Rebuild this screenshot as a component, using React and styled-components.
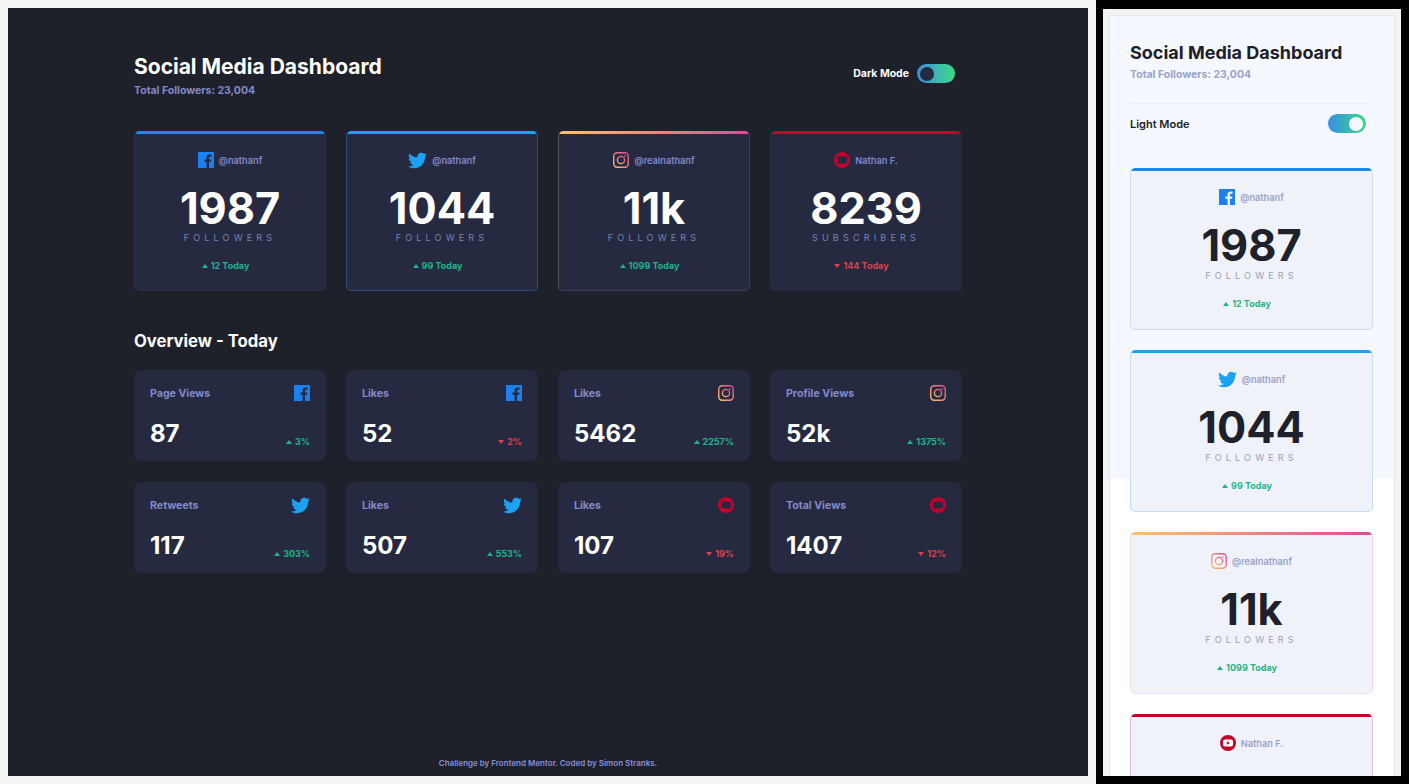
import React from 'react'
import styled, { createGlobalStyle } from 'styled-components'
import { FaTwitter } from 'react-icons/fa'

const GlobalStyle = createGlobalStyle`
  html, body {
    margin: 0;
    padding: 0;
    background: #000;
    font-family: Inter, "Liberation Sans", sans-serif;
  }
  * { box-sizing: border-box; }
`

const BRANDS = {
  facebook: { bar: '#1b8ae6', side: '#262f4f', lightSide: '#c9dcf0' },
  twitter: { bar: '#1da1f2', side: '#2b4c78', lightSide: '#c4dcee' },
  instagram: { bar: 'linear-gradient(90deg, #fdc468, #df4996)', side: '#3c3f55', left: '#565250', right: '#443a58', lightSide: '#e8e8f0', lightLeft: '#eee4dc', lightRight: '#eed6df' },
  youtube: { bar: '#c4032b', side: '#282a40', lightSide: '#dcc2d0' },
}

const followers = [
  { brand: 'facebook', handle: '@nathanf', count: '1987', label: 'FOLLOWERS', change: '12 Today', up: true },
  { brand: 'twitter', handle: '@nathanf', count: '1044', label: 'FOLLOWERS', change: '99 Today', up: true },
  { brand: 'instagram', handle: '@realnathanf', count: '11k', label: 'FOLLOWERS', change: '1099 Today', up: true },
  { brand: 'youtube', handle: 'Nathan F.', count: '8239', label: 'SUBSCRIBERS', change: '144 Today', up: false },
]

const overview = [
  { brand: 'facebook', title: 'Page Views', count: '87', change: '3%', up: true },
  { brand: 'facebook', title: 'Likes', count: '52', change: '2%', up: false },
  { brand: 'instagram', title: 'Likes', count: '5462', change: '2257%', up: true },
  { brand: 'instagram', title: 'Profile Views', count: '52k', change: '1375%', up: true },
  { brand: 'twitter', title: 'Retweets', count: '117', change: '303%', up: true },
  { brand: 'twitter', title: 'Likes', count: '507', change: '553%', up: true },
  { brand: 'youtube', title: 'Likes', count: '107', change: '19%', up: false },
  { brand: 'youtube', title: 'Total Views', count: '1407', change: '12%', up: false },
]

function BrandIcon({ brand, light, id }) {
  if (brand === 'facebook') {
    return (
      <svg width="16" height="16" viewBox="0 0 20 20">
        <path fill="#1b81f0" d="M20 0H0v20h10.7v-7.75H8.08V9.24h2.6V7c0-2.58 1.58-4 3.89-4 1.1 0 2.05.08 2.33.12v2.7h-1.6c-1.25 0-1.5.6-1.5 1.47v1.93h2.99l-.39 3.02h-2.6V20H20z" />
      </svg>
    )
  }
  if (brand === 'twitter') {
    return <FaTwitter size={19} color="#1da1f2" />
  }
  if (brand === 'instagram') {
    return (
      <svg width="16" height="16" viewBox="0 0 16 16" fill="none">
        <defs>
          <linearGradient id={id} x1="0" y1="1" x2="1" y2="0">
            <stop offset="0" stopColor="#fdc468" />
            <stop offset="1" stopColor="#df4996" />
          </linearGradient>
        </defs>
        <rect x="0.75" y="0.75" width="14.5" height="14.5" rx="3.5" stroke={`url(#${id})`} strokeWidth="1.4" />
        <circle cx="8" cy="8" r="3.6" stroke={`url(#${id})`} strokeWidth="1.3" />
        <circle cx="12" cy="4" r="0.8" fill={`url(#${id})`} />
      </svg>
    )
  }
  return (
    <svg width="16" height="16" viewBox="0 0 16 16">
      <circle cx="8" cy="8" r="8" fill="#c4032b" />
      <rect x="3" y="4.4" width="10" height="7.2" rx="2" fill={light ? '#fff' : '#252a41'} />
      <path d="M6.8 6.2v3.6L10 8z" fill={light ? '#c4032b' : '#3a2238'} />
    </svg>
  )
}

function Change({ up, children }) {
  return (
    <ChangeText $up={up}>
      <svg width="6" height="4" viewBox="0 0 6 4">
        <path d={up ? 'M0 4L3 0l3 4z' : 'M0 0l3 4 3-4z'} fill="currentColor" />
      </svg>
      {children}
    </ChangeText>
  )
}

// the last phone card runs off the frame, only its top row is in view
function FollowerCard({ item, light, index, headerOnly }) {
  const brand = BRANDS[item.brand]
  return (
    <Card $brand={brand} $light={light}>
      <TopBar $bar={brand.bar} />
      <Handle>
        <IconSlot>
          <BrandIcon brand={item.brand} light={light} id={`ig-${light ? 'l' : 'd'}-${index}`} />
        </IconSlot>
        <HandleText $light={light}>{item.handle}</HandleText>
      </Handle>
      {!headerOnly && (
        <>
          <BigCount $light={light}>{item.count}</BigCount>
          <CountLabel $light={light}>{item.label}</CountLabel>
          <CardChange>
            <Change up={item.up}>{item.change}</Change>
          </CardChange>
        </>
      )}
    </Card>
  )
}

function Toggle({ on }) {
  return (
    <Track $on={on}>
      <Knob $on={on} />
    </Track>
  )
}

export default function App() {
  return (
    <>
      <GlobalStyle />
      <Page>
        <DesktopFrame>
          <DarkPanel>
            <Content>
              <Header>
                <div>
                  <Title>Social Media Dashboard</Title>
                  <Subtitle>Total Followers: 23,004</Subtitle>
                </div>
                <ModeRow>
                  <ModeLabel>Dark Mode</ModeLabel>
                  <Toggle />
                </ModeRow>
              </Header>
              <FollowerGrid>
                {followers.map((item, i) => (
                  <FollowerCard key={i} item={item} index={i} />
                ))}
              </FollowerGrid>
              <SectionTitle>Overview - Today</SectionTitle>
              <OverviewGrid>
                {overview.map((item, i) => (
                  <OverviewCard key={i}>
                    <OverviewTop>
                      <OverviewTitle>{item.title}</OverviewTitle>
                      <BrandIcon brand={item.brand} id={`ov-${i}`} />
                    </OverviewTop>
                    <OverviewBottom>
                      <OverviewCount>{item.count}</OverviewCount>
                      <Change up={item.up}>{item.change}</Change>
                    </OverviewBottom>
                  </OverviewCard>
                ))}
              </OverviewGrid>
            </Content>
            <Footer>Challenge by Frontend Mentor. Coded by Simon Stranks.</Footer>
          </DarkPanel>
        </DesktopFrame>

        <PhoneFrame>
          <PhoneScreen>
            <PhoneTitle>Social Media Dashboard</PhoneTitle>
            <Subtitle $light>Total Followers: 23,004</Subtitle>
            <PhoneMode>
              <ModeLabel $light>Light Mode</ModeLabel>
              <Toggle on />
            </PhoneMode>
            <PhoneCards>
              {followers.map((item, i) => (
                <FollowerCard key={i} item={item} index={i} light headerOnly={i === 3} />
              ))}
            </PhoneCards>
          </PhoneScreen>
        </PhoneFrame>
      </Page>
    </>
  )
}

const Page = styled.div`
  display: flex;
  width: 1409px;
  height: 784px;
  overflow: hidden;
  background: #000;
`

const DesktopFrame = styled.div`
  width: 1096px;
  height: 784px;
  padding: 8px;
  background: #f3f5f5;
  flex-shrink: 0;
`

const DarkPanel = styled.div`
  height: 768px;
  background: #1e202a;
  display: flex;
  flex-direction: column;
`

const Content = styled.div`
  width: 828px;
  margin: 0 auto;
  padding-top: 45px;
`

const Header = styled.div`
  display: flex;
  justify-content: space-between;
  align-items: flex-start;
  padding-right: 7px;
  height: 78px;
`

const Title = styled.h1`
  margin: 0 0 2px;
  font-size: 21px;
  line-height: 28px;
  font-weight: 700;
  color: #fff;
`

const Subtitle = styled.div`
  font-size: 10.5px;
  line-height: 16px;
  font-weight: 700;
  color: ${(p) => (p.$light ? '#9aa3c9' : '#8389c9')};
`

const ModeRow = styled.div`
  display: flex;
  align-items: center;
  gap: 8px;
  padding-top: 11px;
`

const ModeLabel = styled.span`
  font-size: ${(p) => (p.$light ? '11px' : '10.5px')};
  font-weight: ${(p) => (p.$light ? 600 : 700)};
  color: ${(p) => (p.$light ? '#1e202a' : '#fff')};
`

const Track = styled.div`
  width: 38px;
  height: 19px;
  border-radius: 10px;
  padding: 2.5px 3px;
  display: flex;
  justify-content: ${(p) => (p.$on ? 'flex-end' : 'flex-start')};
  background: linear-gradient(90deg, #378fe6, #3eda82);
`

const Knob = styled.div`
  width: 14px;
  height: 14px;
  border-radius: 50%;
  background: ${(p) => (p.$on ? '#f5f7ff' : '#252a41')};
`

const FollowerGrid = styled.div`
  display: grid;
  grid-template-columns: repeat(4, 192px);
  gap: 20px;
`

const Card = styled.div`
  height: ${(p) => (p.$light ? '162px' : '160px')};
  display: flex;
  flex-direction: column;
  align-items: center;
  overflow: hidden;
  border-radius: 5px;
  background: ${(p) => (p.$light ? '#f0f2fa' : '#252a41')};
  border: 1px solid ${(p) => (p.$light ? p.$brand.lightSide : p.$brand.side)};
  border-top: 0;
  ${(p) => p.$brand.left && `
    border-left-color: ${p.$light ? p.$brand.lightLeft : p.$brand.left};
    border-right-color: ${p.$light ? p.$brand.lightRight : p.$brand.right};
  `}
`

const TopBar = styled.div`
  width: calc(100% + 2px);
  height: 3px;
  flex-shrink: 0;
  background: ${(p) => p.$bar};
`

const Handle = styled.div`
  display: flex;
  align-items: center;
  gap: 5px;
  height: 20px;
  margin-top: 16px;
`

const IconSlot = styled.span`
  display: flex;
`

const HandleText = styled.span`
  font-size: 9.2px;
  font-weight: 600;
  color: ${(p) => (p.$light ? '#9aa3c9' : '#8389c9')};
`

const BigCount = styled.div`
  margin: 17px 0 3px;
  font-size: 43.3px;
  line-height: 42px;
  font-weight: 700;
  color: ${(p) => (p.$light ? '#1e202a' : '#fff')};
`

const CountLabel = styled.div`
  margin-top: ${(p) => (p.$light ? '1px' : '0')};
  font-size: 9px;
  line-height: 12px;
  letter-spacing: 4.2px;
  color: ${(p) => (p.$light ? '#9ca0b4' : '#7a80b4')};
`

const CardChange = styled.div`
  margin-top: 16px;
  padding-right: 9px;
`

const ChangeText = styled.div`
  display: flex;
  align-items: center;
  gap: 3px;
  font-size: 9px;
  line-height: 12px;
  font-weight: 700;
  color: ${(p) => (p.$up ? '#1eb589' : '#dc414c')};
`

const SectionTitle = styled.h2`
  margin: 38px 0 17px;
  font-size: 16.7px;
  line-height: 24px;
  font-weight: 700;
  color: #fff;
`

const OverviewGrid = styled.div`
  display: grid;
  grid-template-columns: repeat(4, 192px);
  grid-auto-rows: 91px;
  gap: 21px 20px;
`

const OverviewCard = styled.div`
  display: flex;
  flex-direction: column;
  justify-content: space-between;
  padding: 15px 16px 12px;
  border-radius: 8px;
  background: #252a41;
`

const OverviewTop = styled.div`
  display: flex;
  justify-content: space-between;
  align-items: center;
  height: 16px;
`

const OverviewTitle = styled.span`
  font-size: 10.6px;
  font-weight: 700;
  color: #8389c9;
`

const OverviewBottom = styled.div`
  display: flex;
  justify-content: space-between;
  align-items: flex-end;

  ${ChangeText} {
    margin-bottom: 1px;
  }
`

const OverviewCount = styled.span`
  font-size: 24px;
  line-height: 30px;
  font-weight: 700;
  color: #fff;
`

const Footer = styled.div`
  margin-top: auto;
  padding-bottom: 7px;
  text-align: center;
  font-size: 8px;
  line-height: 12px;
  font-weight: 600;
  color: #8a8fd6;
`

const PhoneFrame = styled.div`
  width: 298px;
  height: 767px;
  margin: 9px 0 0 7px;
  padding: 6px 6px 0;
  background: #f2f3f3;
  overflow: hidden;
  flex-shrink: 0;
`

const PhoneScreen = styled.div`
  height: 800px;
  padding: 26px 21px 0 20px;
  border: 1px solid #e4e6e8;
  background: linear-gradient(#f5f8fe 463px, #fff 463px);
`

const PhoneTitle = styled(Title)`
  font-size: 18px;
  line-height: 22px;
  margin-bottom: 3px;
  color: #1e202a;
`

const PhoneMode = styled.div`
  display: flex;
  justify-content: space-between;
  align-items: center;
  margin-top: 20px;
  padding: 10px 7px 0 0;
  border-top: 1px solid #ebeef4;
`

const PhoneCards = styled.div`
  margin-top: 35px;
  display: flex;
  flex-direction: column;
  gap: 20px;
`
